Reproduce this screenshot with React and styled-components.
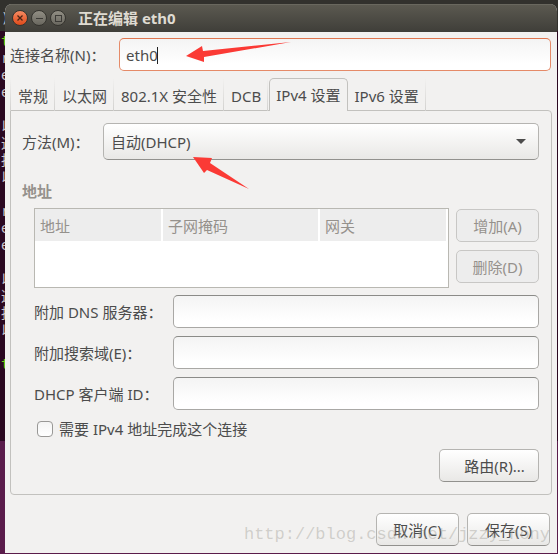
import React, { useState } from 'react'
import styled, { createGlobalStyle } from 'styled-components'

const GlobalStyle = createGlobalStyle`
* {
  box-sizing: border-box;
}
body {
  margin: 0;
  background: #5a1c4b;
}
body, button, input, select, table {
  font-family: "Noto Sans", "Noto Sans CJK SC", sans-serif;
  font-size: 15px;
  line-height: 20px;
  color: #4c4c4c;
}
`

const Desktop = styled.div`
  display: grid;
  grid-template-columns: 5px minmax(0, 1fr);
  padding: 4px 1px 1px 0;
  background: linear-gradient(#32312d 0, #32312d 31px, #2b0821 31px, #2b0821 441px, #5a1c4b 441px);
`
const Terminal = styled.div`
  overflow: hidden;
  padding: 6px 0 0 1px;
  color: #c9c5cb;
`
const TerminalLine = styled.div`
  height: 17px;
  margin-top: ${({ $first }) => ($first ? '6px' : '0')};
  font-family: "DejaVu Sans Mono", "Noto Sans CJK SC", monospace;
  font-size: 14px;
  line-height: 17px;
  white-space: nowrap;
  color: ${({ $prompt }) => ($prompt ? '#6ed018' : 'inherit')};
`
const Window = styled.main`
  position: relative;
  border-radius: 7px 7px 0 0;
  overflow: hidden;
  background: #f2f1f0;
`
const TitleBar = styled.header`
  display: flex;
  align-items: center;
  gap: 3px;
  height: 28px;
  padding-left: 7px;
  background: linear-gradient(#5c5a51, #3f3e39);
  box-shadow: inset 0 1px #69675e;
`
const Title = styled.h1`
  margin: 0 0 0 9px;
  font-size: 15px;
  font-weight: 700;
  line-height: 20px;
  color: #dfdbd2;
`
const WindowButton = styled.button`
  display: flex;
  width: 16px;
  height: 16px;
  padding: 0;
  border: 1px solid #35342f;
  border-radius: 50%;
  background: ${({ $close }) => ($close
    ? 'linear-gradient(#f58a62, #df4a1a)'
    : 'linear-gradient(#918e84, #69675f)')};
`
const Body = styled.form`
  padding: 6px 5px 7px;
`
const NameRow = styled.div`
  display: flex;
  align-items: center;
  padding-right: 1px;
`
const NameLabel = styled.label`
  flex: 0 0 109px;
`
const FieldWrap = styled.div`
  position: relative;
  flex: 1;
  min-width: 0;
`
const TextInput = styled.input`
  display: block;
  width: 100%;
  height: 33px;
  padding: 0 6px;
  border: 1px solid ${({ $active }) => ($active ? '#e58a68' : '#a9a8a5')};
  border-top-color: ${({ $active }) => ($active ? '#df7650' : '#8b8b88')};
  border-radius: 5px;
  background: linear-gradient(#f4f4f4, #ffffff 80%);
  outline: none;
`
const Caret = styled.span`
  position: absolute;
  top: 9px;
  left: 38px;
  width: 1px;
  height: 17px;
  background: #222222;
`
const Pointer = styled.svg`
  position: absolute;
  top: ${({ $top }) => $top}px;
  left: ${({ $left }) => $left}px;
  z-index: 1;
  fill: #fb3a35;
  pointer-events: none;
`
const TabList = styled.div`
  position: relative;
  display: flex;
  gap: 1px;
  height: 33px;
  margin: 7px 0 -1px;
`
const Tab = styled.button`
  flex: none;
  padding: 2px 6px 0;
  border: 1px solid transparent;
  border-left-width: 0;
  background: linear-gradient(#f2f1f0, #d2d1cf) right / 1px 100% no-repeat border-box;
  white-space: nowrap;

  &:first-child {
    padding-left: 7px;
    border-left-width: 1px;
    background:
      linear-gradient(#f2f1f0, #d2d1cf) right / 1px 100% no-repeat border-box,
      linear-gradient(#f2f1f0, #d2d1cf) left / 1px 100% no-repeat border-box;
  }

  &[aria-selected='true'] {
    padding-top: 0;
    border: 1px solid #c2c1be;
    border-bottom: 0;
    border-radius: 5px 5px 0 0;
    background: #f2f1f0;
  }
`
const Panel = styled.section`
  padding: 12px 12px 12px 11px;
  border: 1px solid #c2c1be;
  border-radius: 0 4px 4px 4px;
`
const MethodRow = styled.div`
  display: flex;
  align-items: center;
`
const MethodLabel = styled.label`
  flex: 0 0 81px;
`
const Select = styled.select`
  display: block;
  width: 100%;
  height: 37px;
  padding: 0 30px 0 7px;
  border: 1px solid #b5b4b1;
  border-bottom-color: #92918e;
  border-radius: 5px;
  background: linear-gradient(#ffffff, #e9e8e6);
  appearance: none;
`
const SelectArrow = styled.svg`
  position: absolute;
  top: 16px;
  right: 13px;
  fill: #4c4c4c;
  pointer-events: none;
`
const Heading = styled.h2`
  margin: 21px 0 7px;
  font-size: 15px;
  font-weight: 700;
  line-height: 20px;
  color: #95918c;
`
const Section = styled.div`
  padding-left: 12px;
`
const AddressRow = styled.div`
  display: flex;
  gap: 7px;
  height: 80px;
  margin-bottom: 7px;
`
const TableBox = styled.div`
  flex: 1;
  min-width: 0;
  border: 1px solid #b9b8b2;
  background: #ffffff;
`
const Table = styled.table`
  width: 100%;
  table-layout: fixed;
  border-spacing: 0;
`
const HeaderCell = styled.th`
  width: ${({ $width }) => $width};
  height: 32px;
  padding: 2px 5px 0;
  border-right: 2px solid #ffffff;
  background: #ededed;
  font-weight: 400;
  text-align: left;
  color: #95918c;
`
const SideButtons = styled.div`
  display: flex;
  flex-direction: column;
  gap: 8px;
  padding-top: 1px;
`
const Button = styled.button`
  min-width: ${({ $wide }) => ($wide ? '100px' : '83px')};
  height: 33px;
  padding: 0 ${({ $wide }) => ($wide ? '13px 0 24px' : '8px')};
  border: 1px solid #b5b4b1;
  border-bottom-color: #92918e;
  border-radius: 5px;
  background: linear-gradient(#ffffff, #e9e8e6);
  white-space: nowrap;

  &:disabled {
    border-color: #c8c7c5;
    background: #ededed;
    color: #95918c;
  }
`
const Fields = styled.div`
  display: grid;
  grid-template-columns: 139px minmax(0, 1fr);
  align-items: center;
  row-gap: 8px;
`
const CheckRow = styled.label`
  display: flex;
  align-items: center;
  gap: 6px;
  height: 16px;
  margin: 11px 0 12px 3px;
`
const CheckBox = styled.input`
  width: 16px;
  height: 16px;
  margin: 0;
  border: 1px solid #999896;
  border-radius: 4px;
  background: linear-gradient(#f4f4f4, #ffffff);
  appearance: none;

  &:checked {
    background: #df7650;
  }
`
const ButtonRow = styled.div`
  display: flex;
  justify-content: flex-end;
  gap: 8px;
`
const Footer = styled(ButtonRow)`
  padding: 18px 2px 0 0;
`
const Watermark = styled.div`
  position: absolute;
  right: 7px;
  bottom: 8px;
  font-family: "Liberation Mono", monospace;
  font-size: 17px;
  line-height: 20px;
  color: rgba(150, 148, 140, 0.38);
  pointer-events: none;
`

const terminalLines = ['t', 'r', 'e', 'e', '', '以', '这', '报', '以', '', 'r', 'e', 'e', '', '以', '这', '报', '以', '', 't']
const tabs = ['常规', '以太网', '802.1X 安全性', 'DCB', 'IPv4 设置', 'IPv6 设置']
const columns = [
  { title: '地址', width: '31%' },
  { title: '子网掩码', width: '38%' },
  { title: '网关', width: '31%' },
]
const fields = [
  { id: 'dns', label: '附加 DNS 服务器：' },
  { id: 'search', label: '附加搜索域(E)：' },
  { id: 'client', label: 'DHCP 客户端 ID：' },
]

function WindowControls () {
  return (
    <>
      <WindowButton type="button" aria-label="关闭" $close>
        <svg width="14" height="14" viewBox="0 0 14 14" stroke="#4a2415" strokeWidth="1.3">
          <path d="M4.5 4.5l5 5M9.5 4.5l-5 5" />
        </svg>
      </WindowButton>
      <WindowButton type="button" aria-label="最小化">
        <svg width="14" height="14" viewBox="0 0 14 14" stroke="#3c3b37">
          <path d="M4 7.5h7" />
        </svg>
      </WindowButton>
      <WindowButton type="button" aria-label="最大化">
        <svg width="14" height="14" viewBox="0 0 14 14" stroke="#3c3b37" fill="none">
          <rect x="4.5" y="4.5" width="6" height="6" />
        </svg>
      </WindowButton>
    </>
  )
}

function AddressTable () {
  return (
    <AddressRow>
      <TableBox>
        <Table>
          <thead>
            <tr>
              {columns.map(({ title, width }) => (
                <HeaderCell key={title} $width={width} scope="col">{title}</HeaderCell>
              ))}
            </tr>
          </thead>
        </Table>
      </TableBox>
      <SideButtons>
        <Button type="button" disabled>增加(A)</Button>
        <Button type="button" disabled>删除(D)</Button>
      </SideButtons>
    </AddressRow>
  )
}

function App () {
  const [ name, setName ] = useState('eth0')
  const [ activeTab, setActiveTab ] = useState('IPv4 设置')

  return (
    <>
      <GlobalStyle />
      <Desktop>
        <Terminal aria-hidden="true">
          <TerminalLine>)</TerminalLine>
          {terminalLines.map((line, index) => (
            <TerminalLine key={index} $first={index === 0} $prompt={line === 't'}>{line}</TerminalLine>
          ))}
        </Terminal>
        <Window>
          <TitleBar>
            <WindowControls />
            <Title>正在编辑 eth0</Title>
          </TitleBar>
          <Body onSubmit={event => event.preventDefault()}>
            <NameRow>
              <NameLabel htmlFor="name">连接名称(N)：</NameLabel>
              <FieldWrap>
                <TextInput id="name" $active value={name} onChange={event => setName(event.target.value)} />
                {name === 'eth0' && <Caret />}
                <Pointer $top={3} $left={67} width="106" height="22" viewBox="0 0 106 22">
                  <path d="M0 15L16 5l1 5 88-9L18 16l0 5z" />
                </Pointer>
              </FieldWrap>
            </NameRow>
            <TabList role="tablist">
              {tabs.map(tab => (
                <Tab key={tab} type="button" role="tab" aria-selected={tab === activeTab} onClick={() => setActiveTab(tab)}>
                  {tab}
                </Tab>
              ))}
            </TabList>
            <Panel>
              <MethodRow>
                <MethodLabel htmlFor="method">方法(M)：</MethodLabel>
                <FieldWrap>
                  <Select id="method">
                    <option>自动(DHCP)</option>
                  </Select>
                  <SelectArrow width="10" height="5" viewBox="0 0 10 5"><path d="M0 0h10L5 5z" /></SelectArrow>
                  <Pointer $top={34} $left={90} width="57" height="33" viewBox="0 0 57 33">
                    <path d="M0 0l19 1-2 5 39 26-42-19-3 3z" />
                  </Pointer>
                </FieldWrap>
              </MethodRow>
              <Heading>地址</Heading>
              <Section>
                <AddressTable />
                <Fields>
                  {fields.map(({ id, label }) => (
                    <React.Fragment key={id}>
                      <label htmlFor={id}>{label}</label>
                      <TextInput id={id} />
                    </React.Fragment>
                  ))}
                </Fields>
                <CheckRow>
                  <CheckBox type="checkbox" />
                  需要 IPv4 地址完成这个连接
                </CheckRow>
                <ButtonRow>
                  <Button type="button" $wide>路由(R)...</Button>
                </ButtonRow>
              </Section>
            </Panel>
            <Footer>
              <Button type="button">取消(C)</Button>
              <Button type="submit">保存(S)</Button>
            </Footer>
          </Body>
          <Watermark>http://blog.csdn.net/jzzy_hony</Watermark>
        </Window>
      </Desktop>
    </>
  )
}

export default App
